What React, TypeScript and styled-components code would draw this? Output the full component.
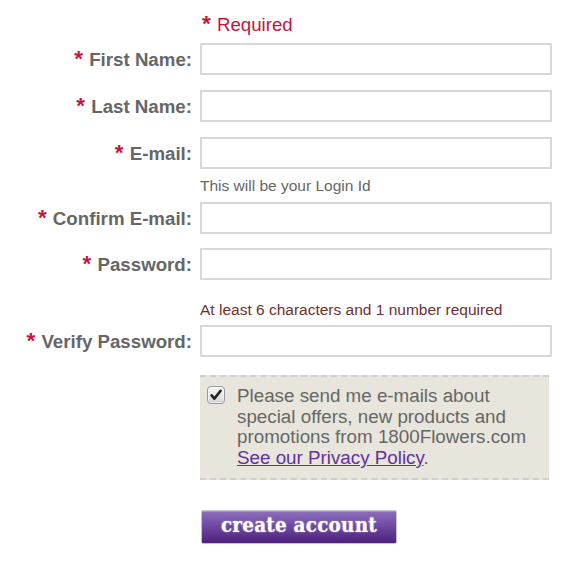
import React from "react";
import styled, { createGlobalStyle } from "styled-components";

const GlobalStyle = createGlobalStyle`
  html, body {
    margin: 0;
    padding: 0;
    background: #ffffff;
  }
  body {
    font-family: "Liberation Sans", Arial, Helvetica, sans-serif;
  }
`;

const Form = styled.form`
  display: flex;
  flex-direction: column;
  padding-top: 14px;
  width: 572px;
`;

const Row = styled.div<{ $mt?: number }>`
  display: grid;
  grid-template-columns: 192px 352px;
  column-gap: 8px;
  align-items: center;
  margin-top: ${(p) => p.$mt ?? 0}px;
`;

const Star = styled.span`
  color: #c8143c;
  font-weight: bold;
  font-size: 1.2em;
  line-height: 0;
  margin-right: 1px;
`;

const RequiredNote = styled.div`
  grid-column: 2;
  font-size: 18.7px;
  line-height: 22px;
  color: #c8143c;
  padding-left: 2px;
`;

const Label = styled.label`
  grid-column: 1;
  text-align: right;
  font-size: 18.7px;
  font-weight: bold;
  color: #666666;
  white-space: nowrap;
  line-height: 22px;
  padding-top: 2px;
`;

const TextInput = styled.input`
  grid-column: 2;
  box-sizing: border-box;
  width: 352px;
  height: 32px;
  border: 2px solid #d8d8d8;
  border-radius: 0;
  background: #ffffff;
  margin: 0;
  padding: 0 6px;
  font-family: "Liberation Sans", Arial, sans-serif;
  font-size: 16px;
  outline: none;
`;

const Hint = styled.div<{ $tone?: "gray" | "brown" }>`
  grid-column: 2;
  font-size: 15.5px;
  line-height: 18px;
  color: ${(p) => (p.$tone === "brown" ? "#6e3030" : "#666666")};
  white-space: nowrap;
`;

const OptInBox = styled.div`
  grid-column: 2;
  box-sizing: border-box;
  width: 349px;
  display: flex;
  align-items: flex-start;
  gap: 12px;
  padding: 9px 7px 9px;
  background: #e8e6dc;
  border-top: 2px dashed #cfcfcf;
  border-bottom: 2px dashed #cfcfcf;
`;

const CheckBox = styled.span`
  flex: none;
  box-sizing: border-box;
  width: 18px;
  height: 18px;
  border: 1px solid #999999;
  border-radius: 4px;
  background: linear-gradient(#f7f7f7, #d4d4d4);
  box-shadow: inset 0 0 0 1px rgba(255, 255, 255, 0.6);
  display: flex;
  align-items: center;
  justify-content: center;
`;

const OptInText = styled.div`
  font-size: 18.8px;
  line-height: 20.7px;
  color: #666666;
`;

const PolicyLink = styled.a`
  color: #62309c;
  text-decoration: underline;
`;

const SubmitButton = styled.button`
  grid-column: 2;
  box-sizing: border-box;
  width: 196px;
  height: 34px;
  margin-left: 1px;
  padding: 0 0 3px;
  border: 1px solid #c4c4c4;
  border-radius: 2px;
  background: linear-gradient(#8d6fbb 0%, #6f4aa4 45%, #4d2179 100%);
  box-shadow: inset 0 1px 0 rgba(255, 255, 255, 0.25);
  color: #ffffff;
  font-family: "DejaVu Serif", "Liberation Serif", serif;
  font-stretch: condensed;
  font-weight: bold;
  font-size: 20.5px;
  letter-spacing: 0.2px;
  text-shadow: 0 0 1.5px rgba(255, 255, 255, 0.7);
  cursor: pointer;
`;

const fields: { label: string; type: string; mt: number }[] = [
  { label: "First Name:", type: "text", mt: 7 },
  { label: "Last Name:", type: "text", mt: 15 },
  { label: "E-mail:", type: "email", mt: 15 },
];

export default function App() {
  return (
    <>
      <GlobalStyle />
      <Form onSubmit={(e) => e.preventDefault()}>
        <Row>
          <RequiredNote>
            <Star>*</Star> Required
          </RequiredNote>
        </Row>
        {fields.map((f) => (
          <Row key={f.label} $mt={f.mt}>
            <Label>
              <Star>*</Star> {f.label}
            </Label>
            <TextInput type={f.type} />
          </Row>
        ))}
        <Row $mt={8}>
          <Hint>This will be your Login Id</Hint>
        </Row>
        <Row $mt={7}>
          <Label>
            <Star>*</Star> Confirm E-mail:
          </Label>
          <TextInput type="email" />
        </Row>
        <Row $mt={14}>
          <Label>
            <Star>*</Star> Password:
          </Label>
          <TextInput type="password" />
        </Row>
        <Row $mt={21}>
          <Hint $tone="brown">At least 6 characters and 1 number required</Hint>
        </Row>
        <Row $mt={6}>
          <Label>
            <Star>*</Star> Verify Password:
          </Label>
          <TextInput type="password" />
        </Row>
        <Row $mt={18}>
          <OptInBox>
            <CheckBox role="checkbox" aria-checked="true">
              <svg width="14" height="14" viewBox="0 0 14 14">
                <path
                  d="M2.6 7.4 L5.4 10.6 L11.6 2.8"
                  fill="none"
                  stroke="#222"
                  strokeWidth="2.6"
                  strokeLinecap="round"
                  strokeLinejoin="round"
                />
              </svg>
            </CheckBox>
            <OptInText>
              Please send me e-mails about special offers, new products and
              promotions from 1800Flowers.com{" "}
              <PolicyLink href="#">See our Privacy Policy</PolicyLink>.
            </OptInText>
          </OptInBox>
        </Row>
        <Row $mt={30}>
          <SubmitButton type="submit">create account</SubmitButton>
        </Row>
      </Form>
    </>
  );
}
